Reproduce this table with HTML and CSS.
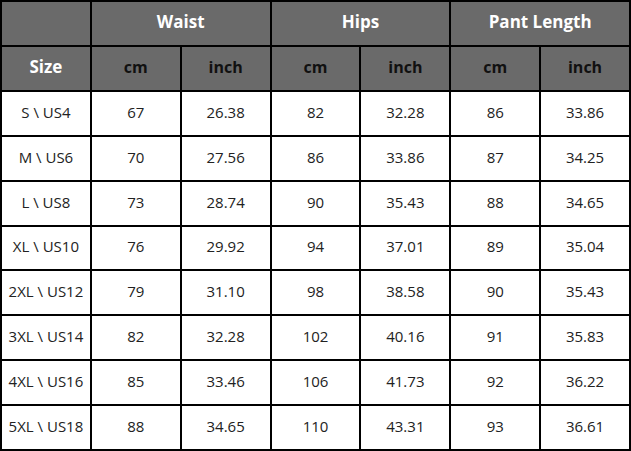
FILE: index.html
```html
<!DOCTYPE html>
<html>
<head>
<meta charset="utf-8">
<link rel="stylesheet" href="styles.css">
</head>
<body>
<div class="chart">
  <div class="cell head"></div>
  <div class="cell head group span2">Waist</div>
  <div class="cell head group span2">Hips</div>
  <div class="cell head group span2">Pant Length</div>

  <div class="cell head group">Size</div>
  <div class="cell head unit">cm</div>
  <div class="cell head unit">inch</div>
  <div class="cell head unit">cm</div>
  <div class="cell head unit">inch</div>
  <div class="cell head unit">cm</div>
  <div class="cell head unit">inch</div>

  <div class="cell">S \ US4</div><div class="cell">67</div><div class="cell">26.38</div><div class="cell">82</div><div class="cell">32.28</div><div class="cell">86</div><div class="cell">33.86</div>
  <div class="cell">M \ US6</div><div class="cell">70</div><div class="cell">27.56</div><div class="cell">86</div><div class="cell">33.86</div><div class="cell">87</div><div class="cell">34.25</div>
  <div class="cell">L \ US8</div><div class="cell">73</div><div class="cell">28.74</div><div class="cell">90</div><div class="cell">35.43</div><div class="cell">88</div><div class="cell">34.65</div>
  <div class="cell">XL \ US10</div><div class="cell">76</div><div class="cell">29.92</div><div class="cell">94</div><div class="cell">37.01</div><div class="cell">89</div><div class="cell">35.04</div>
  <div class="cell">2XL \ US12</div><div class="cell">79</div><div class="cell">31.10</div><div class="cell">98</div><div class="cell">38.58</div><div class="cell">90</div><div class="cell">35.43</div>
  <div class="cell">3XL \ US14</div><div class="cell">82</div><div class="cell">32.28</div><div class="cell">102</div><div class="cell">40.16</div><div class="cell">91</div><div class="cell">35.83</div>
  <div class="cell">4XL \ US16</div><div class="cell">85</div><div class="cell">33.46</div><div class="cell">106</div><div class="cell">41.73</div><div class="cell">92</div><div class="cell">36.22</div>
  <div class="cell">5XL \ US18</div><div class="cell">88</div><div class="cell">34.65</div><div class="cell">110</div><div class="cell">43.31</div><div class="cell">93</div><div class="cell">36.61</div>
</div>
</body>
</html>
```

FILE: styles.css
```css
html, body {
  margin: 0;
  padding: 0;
  background: #ffffff;
}

.chart {
  width: 631px;
  height: 451px;
  box-sizing: border-box;
  display: grid;
  grid-template-columns: repeat(7, 1fr);
  grid-template-rows: repeat(10, 1fr);
  gap: 2px;
  background: #000000;
  border: 2px solid #000;
  font-family: "Open Sans", "DejaVu Sans", sans-serif;
}

.cell {
  background: #ffffff;
  display: flex;
  align-items: center;
  justify-content: center;
  padding-bottom: 3px;
  font-size: 15px;
  color: #222222;
}

.head {
  background: #6a6a6a;
  font-weight: 700;
}

.group {
  color: #ffffff;
  font-size: 17px;
}

.unit {
  color: #111111;
  font-size: 16px;
}

.span2 {
  grid-column: span 2;
}
```
